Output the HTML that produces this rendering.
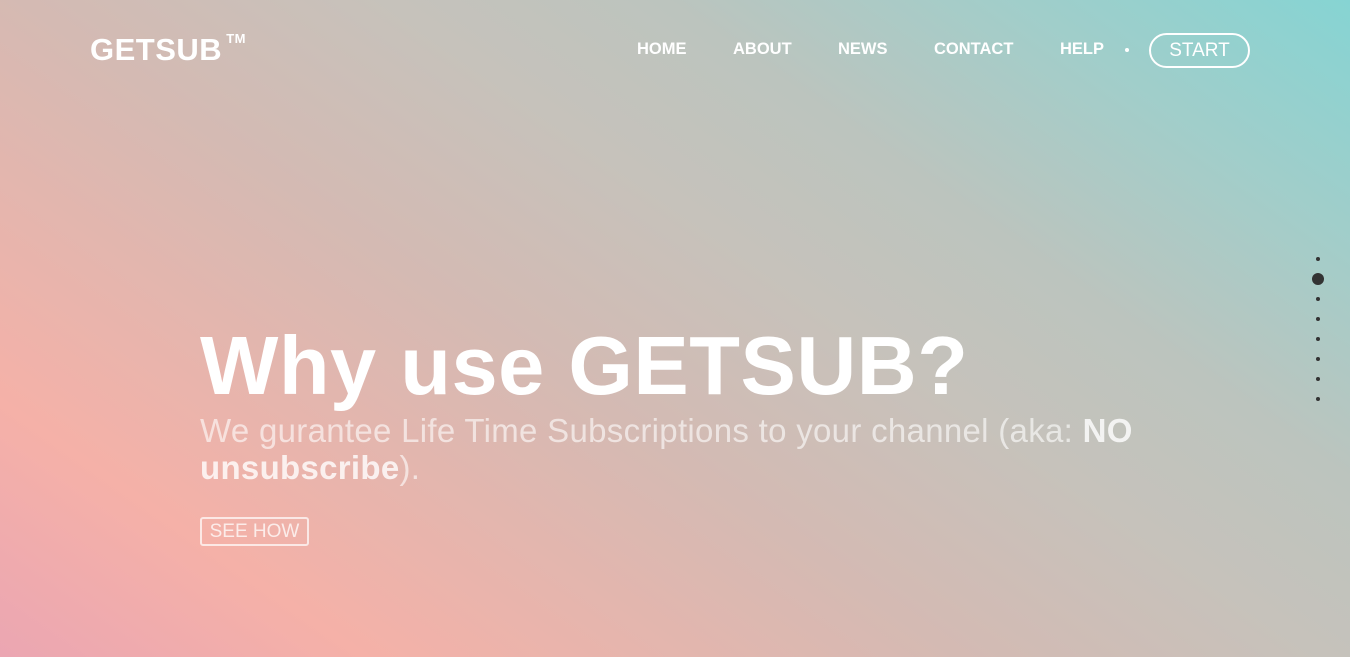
<!DOCTYPE html>
<html><head><style>
html,body{margin:0;padding:0;}
body{width:1350px;height:657px;overflow:hidden;position:relative;font-family:"Liberation Sans",sans-serif;
background:linear-gradient(35deg,#eba6b2 0%,#f5b1a8 16%,#e6b5ad 28%,#d4bab3 42%,#c6c2bb 58%,#bcc4be 70%,#a3cdc9 84%,#86d4d3 100%);}
.logo{position:absolute;left:90px;top:32px;color:#fff;font-weight:bold;font-size:31px;letter-spacing:0.5px}
.logo sup{font-size:13px;position:relative;top:-6px;margin-left:4px}
.nav{position:absolute;top:40px;color:#fff;font-weight:bold;font-size:16.5px}
.dot{position:absolute;left:1125px;top:48px;width:4px;height:4px;border-radius:50%;background:#fff}
.start{position:absolute;left:1149px;top:33px;width:97px;height:31px;border:2px solid #fff;border-radius:18px;color:#fff;font-size:19px;text-align:center;line-height:31px}
.pd{position:absolute;left:1316px;width:4px;height:4px;border-radius:50%;background:#333}
h1{position:absolute;left:200px;top:318px;margin:0;color:#fff;font-size:83px;font-weight:bold;letter-spacing:0.5px}
.sub{position:absolute;left:200px;top:412px;width:1000px;color:rgba(255,255,255,0.6);font-size:33px;line-height:37px;letter-spacing:0.3px}
.sub b{color:rgba(255,255,255,0.8)}
.see{position:absolute;left:200px;top:517px;width:105px;height:25px;border:2px solid rgba(255,255,255,0.7);border-radius:3px;color:rgba(255,255,255,0.75);font-size:19px;line-height:25px;text-align:center}
</style></head><body>
<div class="logo">GETSUB<sup>TM</sup></div>
<div class="nav" style="left:637px">HOME</div>
<div class="nav" style="left:733px">ABOUT</div>
<div class="nav" style="left:838px">NEWS</div>
<div class="nav" style="left:934px">CONTACT</div>
<div class="nav" style="left:1060px">HELP</div>
<div class="dot"></div>
<div class="start">START</div>
<div class="pd" style="top:257px"></div>
<div class="pd" style="top:273px;left:1312px;width:12px;height:12px"></div>
<div class="pd" style="top:297px"></div>
<div class="pd" style="top:317px"></div>
<div class="pd" style="top:337px"></div>
<div class="pd" style="top:357px"></div>
<div class="pd" style="top:377px"></div>
<div class="pd" style="top:397px"></div>
<h1>Why use GETSUB?</h1>
<div class="sub">We gurantee Life Time Subscriptions to your channel (aka: <b>NO unsubscribe</b>).</div>
<div class="see">SEE HOW</div>
</body></html>
